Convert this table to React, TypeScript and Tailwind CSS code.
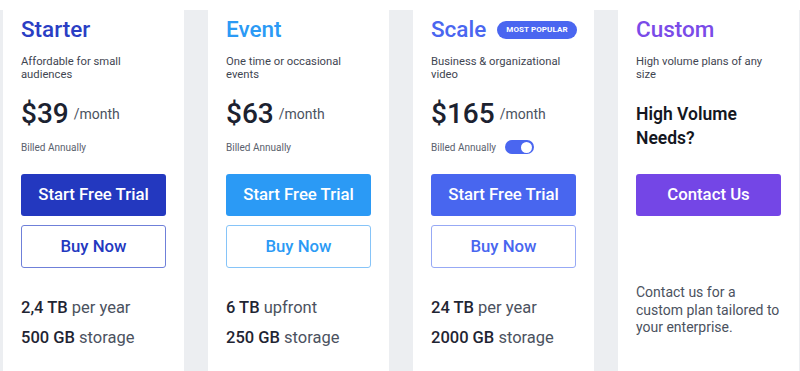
import React from "react";

function Card({ children }: { children: React.ReactNode }) {
  return (
    <div className="w-[181px] shrink-0 bg-white px-[18px] pt-[3px] flex flex-col">
      {children}
    </div>
  );
}

function Title({ text, cls, badge }: { text: string; cls: string; badge?: boolean }) {
  return (
    <div className="flex items-center gap-[11px]">
      <h2 className={`text-[22.5px] leading-[32px] font-medium ${cls}`}>{text}</h2>
      {badge && (
        <span className="mt-[2px] rounded-full bg-[#4a66f0] px-[9px] h-[18px] flex items-center text-[8px] font-bold text-white tracking-[0.1px] whitespace-nowrap">
          MOST POPULAR
        </span>
      )}
    </div>
  );
}

function Desc({ children }: { children: React.ReactNode }) {
  return <p className="mt-[10px] text-[11.25px] leading-[13px] text-[#3f4652] h-[26px]">{children}</p>;
}

function Price({ amount }: { amount: string }) {
  return (
    <div className="mt-[15px] flex items-center gap-[5px] h-[36px]">
      <span className="text-[28px] leading-[36px] font-medium text-[#1c2230]">{amount}</span>
      <span className="text-[14px] text-[#4b5260]">/month</span>
    </div>
  );
}

function Billed({ toggle }: { toggle?: boolean }) {
  return (
    <div className="mt-[6px] flex items-center gap-[9px] h-[18px]">
      <span className="text-[10px] text-[#5a616d]">Billed Annually</span>
      {toggle && (
        <span className="w-[29px] h-[14px] rounded-full bg-[#4a66f0] flex items-center justify-end pr-[2px]">
          <span className="w-[11px] h-[11px] rounded-full bg-white" />
        </span>
      )}
    </div>
  );
}

function Buttons({ fill, line, text }: { fill: string; line: string; text: string }) {
  return (
    <div className="mt-[18px] flex flex-col gap-[9px]">
      <button className={`h-[42px] w-full rounded-[3px] text-[16.75px] font-medium text-white ${fill}`}>
        Start Free Trial
      </button>
      <button className={`h-[43px] w-full rounded-[3px] border border-solid bg-white text-[16.75px] font-medium ${line} ${text}`}>
        Buy Now
      </button>
    </div>
  );
}

function Features({ a, aRest, b }: { a: string; aRest: string; b: string }) {
  return (
    <div className="mt-[25px] flex flex-col text-[16.5px] leading-[30px]">
      <div>
        <span className="font-medium text-[#1f2533]">{a}</span>{" "}
        <span className="text-[#4b5260]">{aRest}</span>
      </div>
      <div>
        <span className="font-medium text-[#1f2533]">{b}</span>{" "}
        <span className="text-[#4b5260]">storage</span>
      </div>
    </div>
  );
}

export default function App() {
  return (
    <div className="w-[800px] h-[371px] overflow-hidden bg-white pt-[10px] font-['Roboto',sans-serif]">
      <div className="flex h-full gap-[24px] bg-[#eceef1] pl-[3px] pr-[1px]">
        <Card>
          <Title text="Starter" cls="text-[#2a3ec4]" />
          <Desc>Affordable for small audiences</Desc>
          <Price amount="$39" />
          <Billed />
          <Buttons fill="bg-[#2338bf]" line="border-[#6f80d9]" text="text-[#2338bf]" />
          <Features a="2,4 TB" aRest="per year" b="500 GB" />
        </Card>
        <Card>
          <Title text="Event" cls="text-[#2b9af5]" />
          <Desc>One time or occasional events</Desc>
          <Price amount="$63" />
          <Billed />
          <Buttons fill="bg-[#2b9af5]" line="border-[#86c4f8]" text="text-[#2b9af5]" />
          <Features a="6 TB" aRest="upfront" b="250 GB" />
        </Card>
        <Card>
          <Title text="Scale" cls="text-[#4a66f0]" badge />
          <Desc>Business &amp; organizational video</Desc>
          <Price amount="$165" />
          <Billed toggle />
          <Buttons fill="bg-[#4866ef]" line="border-[#97a9f5]" text="text-[#4866ef]" />
          <Features a="24 TB" aRest="per year" b="2000 GB" />
        </Card>
        <Card>
          <Title text="Custom" cls="text-[#7a4be8]" />
          <Desc>High volume plans of any size</Desc>
          <div className="mt-[21px] text-[17.5px] leading-[24px] font-semibold text-[#14171f]">
            High Volume
            <br />
            Needs?
          </div>
          <div className="mt-[24px]">
            <button className="h-[42px] w-full rounded-[3px] bg-[#7446e6] text-[16.75px] font-medium text-white">
              Contact Us
            </button>
          </div>
          <p className="mt-[68px] text-[14px] leading-[17.5px] text-[#4b5260]">
            Contact us for a custom plan tailored to your enterprise.
          </p>
        </Card>
      </div>
    </div>
  );
}
